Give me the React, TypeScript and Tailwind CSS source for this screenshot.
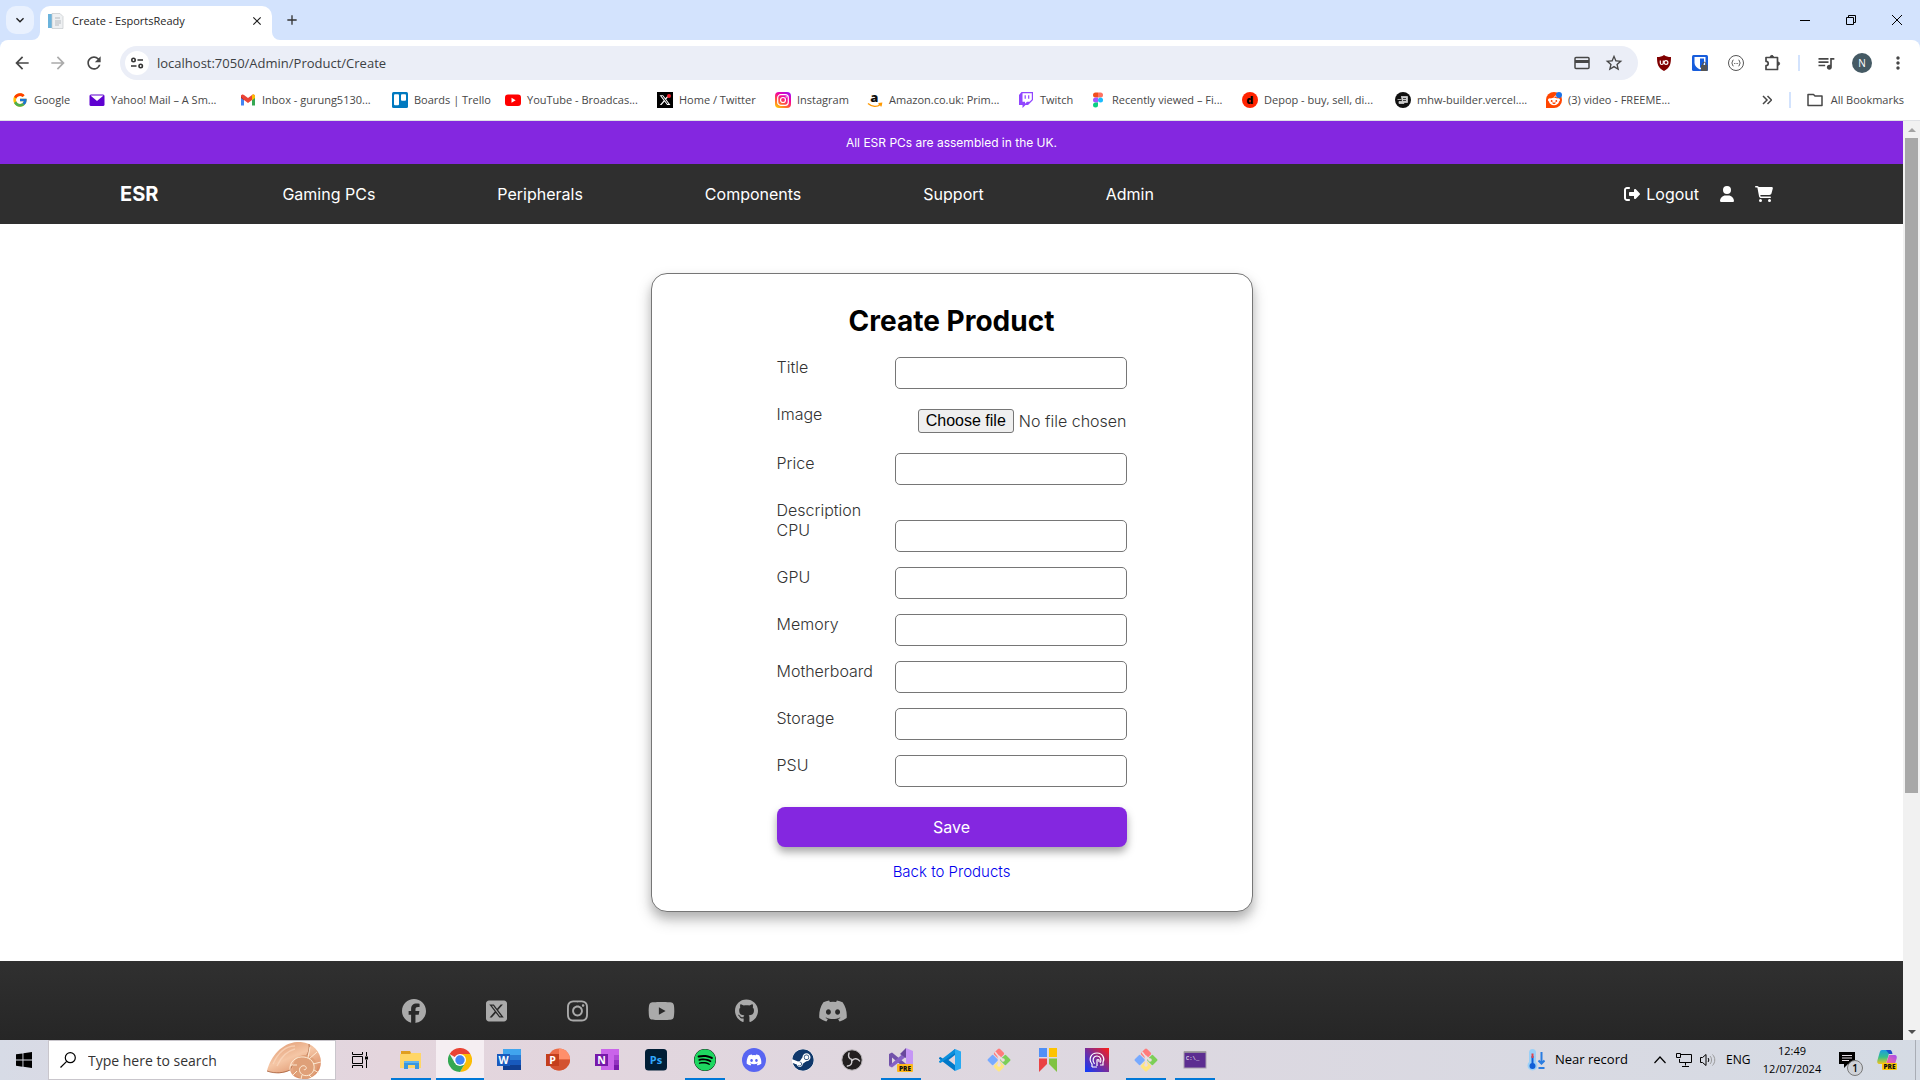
import React from "react";
import { FcGoogle } from "react-icons/fc";
import {
  FaCartShopping, FaDiscord, FaFacebook, FaGithub, FaInstagram, FaRedditAlien, FaRightFromBracket,
  FaSpotify, FaSquareXTwitter, FaSteam, FaUser, FaXTwitter, FaYoutube,
} from "react-icons/fa6";
import { MdClose, MdMoreVert, MdStarBorder, MdArrowBack, MdArrowForward, MdRefresh, MdAdd, MdQueueMusic, MdOutlineKeyboardArrowDown } from "react-icons/md";

const UI = "font-['Open_Sans',sans-serif]";

/* ---------- Bookmark icons ---------- */

const YahooMail = () => (
  <svg viewBox="0 0 16 16" className="size-4"><rect x="0.5" y="2.5" width="15" height="11.5" rx="1.5" fill="#5f01d1" /><path d="M1.5 3.5h13L8 9z" fill="#fff" /></svg>
);
const Gmail = () => (
  <svg viewBox="0 0 16 16" className="size-4">
    <path d="M1 4v9.5h3V7z" fill="#4285f4" /><path d="M15 4v9.5h-3V7z" fill="#34a853" />
    <path d="M1 3.6h3v4.6L1 6z" fill="#c5221f" />
    <path d="M1 4.2C1 2.5 3 2 4 3l4 3 4-3c1-1 3-.5 3 1.2L12 8 8 11 4 8z" fill="#ea4335" />
    <path d="M12 3v5.2L15 6V4.2C15 2.6 13 2 12 3z" fill="#fbbc04" />
  </svg>
);
const Trello = () => (
  <svg viewBox="0 0 16 16" className="size-4"><rect width="16" height="16" rx="1.5" fill="#0079bf" /><rect x="2" y="2.2" width="5" height="11" rx="1" fill="#fff" /><rect x="9" y="2.2" width="5" height="6.5" rx="1" fill="#fff" /></svg>
);
const YouTubeMark = () => (
  <svg viewBox="0 0 16 16" className="size-4"><rect y="2.5" width="16" height="11.5" rx="3" fill="#f00" /><path d="M6.5 5.7v5l4.2-2.5z" fill="#fff" /></svg>
);
const XMark = () => (
  <span className="relative flex size-4 items-center justify-center bg-black text-white">
    <FaXTwitter className="size-3" />
    <span className="absolute right-0.5 top-0.5 size-1 rounded-full bg-[#f4212e]" />
  </span>
);
const InstagramMark = () => (
  <svg viewBox="0 0 16 16" className="size-4">
    <defs>
      <linearGradient id="ig" x1="0.2" y1="1" x2="0.8" y2="0"><stop offset="0" stopColor="#ffc107" /><stop offset="0.35" stopColor="#ff543e" /><stop offset="0.65" stopColor="#f4039e" /><stop offset="1" stopColor="#a611f0" /></linearGradient>
    </defs>
    <rect width="16" height="16" rx="4" fill="url(#ig)" />
    <rect x="2.7" y="2.7" width="10.6" height="10.6" rx="3" fill="none" stroke="#fff" strokeWidth="1.2" />
    <circle cx="8" cy="8" r="2.5" fill="none" stroke="#fff" strokeWidth="1.2" /><circle cx="11.2" cy="4.9" r="0.7" fill="#fff" />
  </svg>
);
const AmazonMark = () => (
  <svg viewBox="0 0 16 16" className="size-4 overflow-visible">
    <text x="7.3" y="10" textAnchor="middle" fontSize="13" fontWeight="800" fontFamily="Open Sans" fill="#111">a</text>
    <path d="M1 11.5c4 3.500 9 3.500 12.500 1M11.500 11.700l3-.4-.6 3" fill="none" stroke="#f90" strokeWidth="1.4" />
  </svg>
);
const TwitchMark = () => (
  <svg viewBox="0 0 16 16" className="size-4"><path d="M3.500 0 1 3v10h3.500v3l3-3H10l5-5V0z" fill="#9146ff" /><path d="M4.500 1.200h9.300v6.300l-2.300 2.300H9L7 11.800v-2H4.500z" fill="#fff" /><path d="M7.200 3.300v3.500M10.700 3.300v3.500" stroke="#9146ff" strokeWidth="1.2" /></svg>
);
const FigmaMark = () => (
  <svg viewBox="0 0 16 16" className="size-4">
    <path d="M8 .5H5.500a2.500 2.500 0 0 0 0 5H8z" fill="#f24e1e" /><path d="M8 .5h2.500a2.500 2.500 0 0 1 0 5H8z" fill="#ff7262" />
    <path d="M8 5.500H5.500a2.500 2.500 0 0 0 0 5H8z" fill="#a259ff" /><circle cx="10.500" cy="8" r="2.500" fill="#1abcfe" />
    <path d="M8 10.500H5.500A2.500 2.500 0 1 0 8 13z" fill="#0acf83" />
  </svg>
);
const DepopMark = () => (
  <svg viewBox="0 0 16 16" className="size-4"><circle cx="8" cy="8" r="8" fill="#ff2300" /><text x="7.7" y="12" textAnchor="middle" fontSize="11" fontWeight="800" fontFamily="Open Sans" fill="#000">d</text></svg>
);
const MhwMark = () => (
  <svg viewBox="0 0 16 16" className="size-4"><circle cx="8" cy="8" r="8" fill="#111" /><path d="M6 4.500h6.500v6H9v1H4v-2h3M2.500 7.500h4" fill="#ccc" stroke="#ccc" strokeWidth="0.8" /><path d="M8 6.500h3M8 8.500h3" stroke="#444" /></svg>
);
const RedditMark = () => (
  <span className="relative flex size-4 items-center justify-center rounded-full rounded-bl-none bg-[#ff4500] text-white">
    <FaRedditAlien className="size-3" />
    <span className="absolute right-0 top-0 size-1.5 rounded-full bg-[#1a73e8]" />
  </span>
);

const bookmarks: { label: string; icon: React.ReactNode; width: string }[] = [
  { label: "Google", icon: <FcGoogle className="size-4" />, width: "w-[77px]" },
  { label: "Yahoo! Mail – A Sm...", icon: <YahooMail />, width: "w-[151px]" },
  { label: "Inbox - gurung5130...", icon: <Gmail />, width: "w-[152px]" },
  { label: "Boards | Trello", icon: <Trello />, width: "w-[113px]" },
  { label: "YouTube - Broadcas...", icon: <YouTubeMark />, width: "w-[152px]" },
  { label: "Home / Twitter", icon: <XMark />, width: "w-[118px]" },
  { label: "Instagram", icon: <InstagramMark />, width: "w-[92px]" },
  { label: "Amazon.co.uk: Prim...", icon: <AmazonMark />, width: "w-[151px]" },
  { label: "Twitch", icon: <TwitchMark />, width: "w-[72px]" },
  { label: "Recently viewed – Fi...", icon: <FigmaMark />, width: "w-[152px]" },
  { label: "Depop - buy, sell, di...", icon: <DepopMark />, width: "w-[153px]" },
  { label: "mhw-builder.vercel....", icon: <MhwMark />, width: "w-[151px]" },
  { label: "(3) video - FREEME...", icon: <RedditMark />, width: "w-[151px]" },
];

/* ---------- Browser chrome ---------- */

function TabStrip() {
  return (
    <div className="flex h-10 shrink-0 items-stretch bg-[#d3e3fd] pl-1.5">
      <button aria-label="Search tabs" className="mt-1.5 flex h-7 w-7 items-center justify-center rounded-[10px] bg-[#e9f1fe] text-[#1f1f1f]">
        <MdOutlineKeyboardArrowDown className="size-4 stroke-current" />
      </button>
      <div className="relative ml-1.5 mt-1.5 flex w-[232px] items-center rounded-t-[10px] bg-white pl-2 pr-2 pb-1">
        <svg viewBox="0 0 8 8" className="absolute -left-2 bottom-0 size-2"><path d="M8 0v8H0a8 8 0 0 0 8-8z" fill="#fff" /></svg>
        <svg viewBox="0 0 8 8" className="absolute -right-2 bottom-0 size-2"><path d="M0 0v8h8a8 8 0 0 1-8-8z" fill="#fff" /></svg>
        <svg viewBox="0 0 16 16" className="size-4"><path d="M0 1h4v14H0z" fill="#6bb3dc" /><path d="M4 .5h8l3 3v12H4z" fill="#eef0f2" stroke="#c4c8cc" strokeWidth="0.7" /><path d="M7 5h5M7 8h6M7 10h6M7 12h4" stroke="#b5babf" /></svg>
        <span className="ml-2 text-[11px] text-[#1f1f1f]">Create - EsportsReady</span>
        <button aria-label="Close tab" className="ml-auto text-[#1f1f1f]"><MdClose className="size-3.5 stroke-current" /></button>
      </div>
      <button aria-label="New tab" className="ml-2 flex w-6 items-center justify-center text-[#333]"><MdAdd className="size-4" /></button>
      <div className="ml-auto flex items-center text-black">
        <button aria-label="Minimize" className="flex w-[46px] justify-center"><svg viewBox="0 0 10 10" className="size-2.5"><path d="M0 5.500h10" stroke="currentColor" /></svg></button>
        <button aria-label="Restore" className="flex w-[46px] justify-center"><svg viewBox="0 0 10 10" className="size-2.5" fill="none" stroke="currentColor"><path d="M.5 2.500h7v7h-7zM2.500 2.500v-2h7v7h-2" /></svg></button>
        <button aria-label="Close window" className="flex w-[46px] justify-center"><svg viewBox="0 0 10 10" className="size-2.5"><path d="M0 0l10 10M10 0 0 10" stroke="currentColor" /></svg></button>
      </div>
    </div>
  );
}

function Toolbar() {
  return (
    <div className="flex h-[46px] shrink-0 items-center rounded-t-lg bg-white pl-3 text-[#474747]">
      <button aria-label="Back" className="flex w-5 justify-center"><MdArrowBack className="size-5" /></button>
      <button aria-label="Forward" className="ml-4 flex w-5 justify-center text-[#ababab]"><MdArrowForward className="size-5" /></button>
      <button aria-label="Reload" className="ml-4 flex w-5 justify-center"><MdRefresh className="size-5" /></button>
      <div className="ml-4 flex h-[34px] flex-1 items-center rounded-full bg-[#ebeef7] pl-[5px] pr-3.5">
        <button aria-label="View site information" className="flex size-6 items-center justify-center rounded-full bg-white text-[#333]">
          <svg viewBox="0 0 14 14" className="size-3.5" fill="none" stroke="currentColor" strokeWidth="1.6"><circle cx="3.5" cy="4" r="1.7" /><path d="M7.500 4H13M1 10h5.500" /><circle cx="10.7" cy="10" r="1.7" /></svg>
        </button>
        <input aria-label="Address" defaultValue="localhost:7050/Admin/Product/Create" className="ml-2 h-6 flex-1 bg-transparent text-[13px] leading-6 text-[#3c4043] outline-none" />
        <svg viewBox="0 0 16 16" className="size-4"><rect x="1" y="2.5" width="14" height="11" rx="1" fill="none" stroke="currentColor" strokeWidth="1.5" /><path d="M1 5h14v3H1z" fill="currentColor" /></svg>
        <button aria-label="Bookmark this tab" className="ml-3.5"><MdStarBorder className="size-5" /></button>
      </div>
      <div className="ml-[18px] flex items-center">
        <svg viewBox="0 0 16 16" className="size-4"><path d="M8 0c2 1.500 4 2 7 2 0 7-1 11-7 14C2 13 1 9 1 2c3 0 5-.5 7-2z" fill="#800000" /><path d="M4.300 5.500V8a1.500 1.500 0 0 0 3 0V5.500" fill="none" stroke="#fff" strokeWidth="1.2" /><circle cx="10" cy="7.5" r="1.9" fill="none" stroke="#fff" strokeWidth="1.2" /></svg>
        <svg viewBox="0 0 16 16" className="ml-5 size-4"><rect width="16" height="16" rx="1.5" fill="#175ddc" /><path d="M2.500 2h11v6c0 3-2.500 5-5.500 6.500C5 13 2.500 11 2.500 8z" fill="#fff" /><path d="M8 3.500h4V8c0 2-1.500 3.500-4 5z" fill="#175ddc" /><path d="M9 10h6.500v6H9z" fill="#555" /><path d="M10.500 10V9a1.700 1.700 0 0 1 3.500 0v1" fill="none" stroke="#555" /></svg>
        <svg viewBox="0 0 16 16" className="ml-5 size-4" fill="none" stroke="#555"><circle cx="8" cy="8" r="7.5" /><path d="M5.500 5c-1.500 0-.5 2-1.800 3 1.300 1 .3 3 1.800 3M10.500 5c1.500 0 .5 2 1.800 3-1.300 1-.3 3-1.800 3M6 8.500h.8M7.700 8.500h.8M9.300 8.500h.8" /></svg>
        <button aria-label="Extensions" className="ml-5">
          <svg viewBox="0 0 18 18" className="size-[18px]" fill="none" stroke="currentColor" strokeWidth="1.7" strokeLinejoin="round"><path d="M2 3.500h11.500v12H2v-3.800a2.200 2.200 0 0 0 0-4.400z" /><path d="M6.200 3a1.600 1.600 0 0 1 3.200 0zM14 8a1.600 1.600 0 0 1 0 3.200z" fill="currentColor" strokeWidth="1" /></svg>
        </button>
        <span className="ml-4 h-4 w-0.5 bg-[#d3e3fd]" />
        <button aria-label="Media controls" className="ml-4"><MdQueueMusic className="size-5" /></button>
        <button aria-label="Profile" className="ml-4 flex size-5 items-center justify-center rounded-full bg-[#455a64] text-[10px] text-white">N</button>
        <button aria-label="Menu" className="ml-4 mr-3"><MdMoreVert className="size-5" /></button>
      </div>
    </div>
  );
}

function BookmarksBar() {
  return (
    <div className="flex h-[35px] shrink-0 items-start border-b border-[#dfe1e5] bg-white pl-3 pt-1.5 text-[11px] leading-4 text-[#474747]">
      {bookmarks.map((b) => (
        <a key={b.label} href="#" className={`flex h-4 shrink-0 items-center gap-1.5 whitespace-nowrap ${b.width}`}>
          <span className="shrink-0">{b.icon}</span>
          {b.label}
        </a>
      ))}
      <div className="ml-auto flex h-4 items-center pr-4">
        <button aria-label="More bookmarks"><svg viewBox="0 0 10 10" className="size-2.5" fill="none" stroke="currentColor" strokeWidth="1.5"><path d="m1 1 4 4-4 4M5.500 1l4 4-4 4" /></svg></button>
        <span className="ml-[17px] h-4 w-0.5 bg-[#d3e3fd]" />
        <a href="#" className="ml-4 flex items-center gap-2"><svg viewBox="0 0 16 14" className="h-3.5 w-4" fill="none" stroke="currentColor" strokeWidth="1.5"><path d="M1 2.500v10h14V3H8L6.500 1.500H1z" strokeLinejoin="round" /></svg>All Bookmarks</a>
      </div>
    </div>
  );
}

/* ---------- Web page ---------- */

function SiteHeader() {
  return (
    <header>
      <p className="flex h-[43px] items-center justify-center bg-[#8427e0] text-xs text-white">All ESR PCs are assembled in the UK.</p>
      <nav className="flex h-[60px] items-center bg-[#2f2f2f] pl-[120px] pr-[130px] text-base text-white">
        <a href="#" className="mr-[124px] text-xl font-bold">ESR</a>
        <div className="flex items-center gap-[122px]">
          {["Gaming PCs", "Peripherals", "Components", "Support", "Admin"].map((n) => (
            <a key={n} href="#">{n}</a>
          ))}
        </div>
        <a href="#" className="ml-auto flex items-center gap-1.5"><FaRightFromBracket className="size-4" />Logout</a>
        <a href="#" aria-label="Account" className="ml-5"><FaUser className="size-4" /></a>
        <a href="#" aria-label="Cart" className="ml-5"><FaCartShopping className="h-4 w-[18px]" /></a>
      </nav>
    </header>
  );
}

function Field({ name }: { name: string }) {
  const id = name.toLowerCase();
  return (
    <div className="mb-[15px] flex items-start justify-between">
      <label htmlFor={id}>{name}</label>
      <input id={id} type="text" className="h-8 w-[232px] rounded-[5px] border border-[#767676] bg-white px-2" />
    </div>
  );
}

function CreateProduct() {
  return (
    <main className="flex justify-center bg-white py-[49px]">
      <section className="flex w-[602px] flex-col items-center rounded-2xl border border-[#767676] bg-white pb-[29px] pt-[30px] shadow-[0_8px_16px_rgba(0,0,0,0.2),0_6px_10px_rgba(0,0,0,0.15)]">
        <h1 className="mb-[19px] text-[28px] font-bold leading-[34px] text-black">Create Product</h1>
        <form className="w-[350px] font-light leading-5 text-[#333]" onSubmit={(e) => e.preventDefault()}>
          <Field name="Title" />
          <div className="mb-[15px] flex h-[34px] items-start justify-between">
            <label htmlFor="image">Image</label>
            <input id="image" type="file" className="sr-only" />
            <span className="flex items-center gap-[5px] pt-[5px]">
              <button type="button" className="h-6 rounded-[3px] border border-[#767676] bg-[#efefef] px-[7px] font-['Liberation_Sans',sans-serif] font-normal text-black">Choose file</button>
              No file chosen
            </span>
          </div>
          <Field name="Price" />
          <div>Description</div>
          {["CPU", "GPU", "Memory", "Motherboard", "Storage", "PSU"].map((n) => <Field key={n} name={n} />)}
          <button type="submit" className="mt-[5px] h-10 w-full rounded-lg bg-[#8427e0] font-normal text-white shadow-[0_5px_8px_rgba(0,0,0,0.35)]">Save</button>
        </form>
        <a href="#" className="mt-[15px] text-[15px] font-light leading-5 text-[#0000ee]">Back to Products</a>
      </section>
    </main>
  );
}

function SiteFooter() {
  return (
    <footer className="h-[120px] bg-linear-to-b from-[#303030] to-[#212121]">
      <div className="flex h-[99px] items-center gap-[60px] pl-[402px] text-[#aaa]">
        <a href="#" aria-label="Facebook"><FaFacebook className="size-6" /></a>
        <a href="#" aria-label="X"><FaSquareXTwitter className="h-6 w-[21px]" /></a>
        <a href="#" aria-label="Instagram"><FaInstagram className="h-6 w-[21px]" /></a>
        <a href="#" aria-label="YouTube"><FaYoutube className="h-6 w-[27px]" /></a>
        <a href="#" aria-label="GitHub"><FaGithub className="h-6 w-[23px]" /></a>
        <a href="#" aria-label="Discord"><FaDiscord className="h-6 w-[30px]" /></a>
      </div>
    </footer>
  );
}

function Scrollbar() {
  return (
    <div className="flex w-[17px] shrink-0 flex-col bg-[#f1f1f1]">
      <span className="flex h-[17px] items-center justify-center"><svg viewBox="0 0 8 4" className="h-1 w-2"><path d="M0 4 4 0l4 4z" fill="#a3a3a3" /></svg></span>
      <div className="flex-1 px-0.5"><div className="h-[74%] bg-[#a8a8a8]" /></div>
      <span className="flex h-[17px] items-center justify-center"><svg viewBox="0 0 8 4" className="h-1 w-2"><path d="M0 0l4 4 4-4z" fill="#505050" /></svg></span>
    </div>
  );
}

/* ---------- Taskbar ---------- */

const OfficeTile = ({ letter, colors }: { letter: string; colors: string[] }) => (
  <svg viewBox="0 0 24 24" className="size-6">
    <path d="M6 1h18v6H6z" fill={colors[0]} /><path d="M6 7h18v5H6z" fill={colors[1]} /><path d="M6 12h18v5H6z" fill={colors[2]} /><path d="M6 17h18v5H6z" fill={colors[3]} />
    <rect y="6" width="13" height="12" fill={colors[4]} />
    <text x="6.5" y="15.7" textAnchor="middle" fontSize="10.5" fontWeight="700" fontFamily="Open Sans" fill="#fff">{letter}</text>
  </svg>
);
const PowerPoint = () => (
  <svg viewBox="0 0 24 24" className="size-6">
    <circle cx="13" cy="11.5" r="11" fill="#ed6c47" /><path d="M13 .5a11 11 0 0 1 11 11H13z" fill="#ff8f6b" /><path d="M2 11.500h22a11 11 0 0 1-22 0z" fill="#d35230" />
    <rect y="6" width="13" height="12" fill="#c43e1c" /><text x="6.5" y="15.7" textAnchor="middle" fontSize="10.5" fontWeight="700" fontFamily="Open Sans" fill="#fff">P</text>
  </svg>
);
const OneNote = () => (
  <svg viewBox="0 0 24 24" className="size-6">
    <path d="M6 1h18v21H6z" fill="#ca64ea" /><path d="M19 7h5v5h-5z" fill="#ae4bd5" /><path d="M19 12h5v5h-5z" fill="#9332bf" /><path d="M19 17h5v5h-5z" fill="#7719aa" />
    <rect y="6" width="13" height="12" fill="#7719aa" /><text x="6.5" y="15.7" textAnchor="middle" fontSize="10.5" fontWeight="700" fontFamily="Open Sans" fill="#fff">N</text>
  </svg>
);
const Photoshop = () => (
  <svg viewBox="0 0 24 24" className="size-6"><rect x="1" y="1" width="22" height="21.5" rx="3.5" fill="#001e36" /><text x="12" y="16" textAnchor="middle" fontSize="11" fontWeight="700" fontFamily="Open Sans" fill="#31a8ff">Ps</text></svg>
);
const Explorer = () => (
  <svg viewBox="0 0 24 24" className="size-6"><path d="M2 3h9l1 2h9v5H2z" fill="#e09f1f" /><path d="M1 6h10l1-1h10v15H1z" fill="#ffd667" /><path d="M5 21v-8h15v8h-4v-4h-7v4z" fill="#3b97de" /><path d="M5 13h15v2H5z" fill="#5fb4f0" /></svg>
);
const Chrome = () => (
  <svg viewBox="0 0 24 24" className="size-6">
    <path d="M12 12 1.600 6A12 12 0 0 1 22.400 6z" fill="#ea4335" /><path d="M12 6h10.400A12 12 0 0 1 12 24l5.200-9z" fill="#fbbc05" /><path d="M1.600 6A12 12 0 0 0 12 24l5.200-9L12 12 6.800 15z" fill="#34a853" />
    <circle cx="12" cy="12" r="6" fill="#fff" /><circle cx="12" cy="12" r="4.7" fill="#4285f4" />
  </svg>
);
const Spotify = () => <FaSpotify className="size-[22px] rounded-full bg-black text-[#1ed760]" />;
const DiscordApp = () => <span className="flex size-6 items-center justify-center rounded-full bg-[#5865f2] text-white"><FaDiscord className="size-4" /></span>;
const Steam = () => <FaSteam className="size-[22px] rounded-full bg-white text-[#10386b]" />;
const Obs = () => (
  <svg viewBox="0 0 24 24" className="size-6">
    <circle cx="12" cy="12" r="10.2" fill="#231f20" stroke="#b9b5b8" strokeWidth="1" />
    <g fill="none" stroke="#d0cdd0" strokeWidth="1.5" strokeLinecap="round">
      <path d="M12 11.500c-3-.5-4.300-3.300-3-6.500" />
      <path d="M12 11.500c-3-.5-4.300-3.300-3-6.500" transform="rotate(120 12 12)" />
      <path d="M12 11.500c-3-.5-4.300-3.300-3-6.500" transform="rotate(240 12 12)" />
    </g>
  </svg>
);
const VisualStudio = () => (
  <svg viewBox="0 0 24 24" className="size-6">
    <path d="M0 6 3 4.500l16 13-1 4.500L3 9.500v7L0 18z" fill="#7252aa" /><path d="M0 18 18 2v6L3 19.500z" fill="#8661c5" /><path d="m17 0 7 3v18l-7 3z" fill="#c596f5" /><path d="m17 0-6 6 6 4z" fill="#68479c" />
    <rect x="8" y="16" width="16" height="8" rx="1" fill="#ffb91a" /><text x="16" y="22.5" textAnchor="middle" fontSize="6.5" fontWeight="800" fontFamily="Open Sans" fill="#111">PRE</text>
  </svg>
);
const VsCode = () => (
  <svg viewBox="0 0 24 24" className="size-6"><path d="M17 1 6 11.500 2.500 9 1 9.800v1L17 23z" fill="#0078c8" /><path d="M17 1 1 13.300v1l1.500.8L17 5z" fill="#0a8fdc" /><path d="m17 1 6 2.500v17L17 23z" fill="#29aaf2" /><path d="M17 7v10l-6.500-5z" fill="#e3d5dc" /></svg>
);
const GitApp = () => (
  <svg viewBox="0 0 24 24" className="size-6">
    <g transform="rotate(45 12 12)"><rect x="3.5" y="3.5" width="8" height="8" rx="1.5" fill="#ff7b7b" /><rect x="12.5" y="3.5" width="8" height="8" rx="1.5" fill="#7ccf57" /><rect x="3.5" y="12.5" width="8" height="8" rx="1.5" fill="#77aaff" /><rect x="12.5" y="12.5" width="8" height="8" rx="1.5" fill="#ffe680" /></g>
    <path d="m8 4 4 5v9M12 9l4 3" fill="none" stroke="#eadde3" strokeWidth="1.7" /><circle cx="12" cy="9" r="1.5" fill="#eadde3" /><circle cx="16" cy="12" r="1.8" fill="#eadde3" /><circle cx="12" cy="17" r="1.8" fill="#eadde3" />
  </svg>
);
const Ribbon = () => (
  <svg viewBox="0 0 24 24" className="size-6"><path d="M3 0h8v9H3z" fill="#4f8ff7" /><path d="M13 0h8v9h-8z" fill="#fdc300" /><path d="M3 10.500h8V16l-8 8z" fill="#ea4344" /><path d="M13 10.500h8V24l-8-8z" fill="#80c342" /></svg>
);
const HeadApp = () => (
  <svg viewBox="0 0 24 24" className="size-6">
    <defs><linearGradient id="head" x1="0" y1="1" x2="1" y2="0"><stop offset="0" stopColor="#0a3cff" /><stop offset="0.5" stopColor="#7a2c9a" /><stop offset="1" stopColor="#ff1e14" /></linearGradient></defs>
    <path d="M0 0h24v24H0z" fill="url(#head)" />
    <path d="M7 19v-3c-4-5-1-11 5-11s8 6 6 9v3h-3M9.500 16c-3-4-1-8 2.500-8s5 4 3 7M12 18v-6a1.500 1.500 0 0 1 2 0v2M7 19h5" fill="none" stroke="#fff" strokeWidth="1.2" />
  </svg>
);
const Terminal = () => (
  <svg viewBox="0 0 24 24" className="size-6"><rect x="1" y="4" width="22" height="16" fill="#5c2d91" stroke="#a9a0ae" /><path d="M1 4h22" stroke="#999" strokeWidth="1.5" /><text x="3" y="11.5" fontSize="5.5" fontFamily="Liberation Mono" fill="#fff">C:\_</text></svg>
);

const apps: { name: string; icon: React.ReactNode; running?: boolean; active?: boolean }[] = [
  { name: "File Explorer", icon: <Explorer />, running: true },
  { name: "Google Chrome", icon: <Chrome />, active: true },
  { name: "Word", icon: <OfficeTile letter="W" colors={["#41a5ee", "#2b7cd3", "#185abd", "#103f91", "#185abd"]} /> },
  { name: "PowerPoint", icon: <PowerPoint /> },
  { name: "OneNote", icon: <OneNote /> },
  { name: "Photoshop", icon: <Photoshop /> },
  { name: "Spotify", icon: <Spotify />, running: true },
  { name: "Discord", icon: <DiscordApp /> },
  { name: "Steam", icon: <Steam /> },
  { name: "OBS Studio", icon: <Obs /> },
  { name: "Visual Studio Preview", icon: <VisualStudio />, running: true },
  { name: "Visual Studio Code", icon: <VsCode /> },
  { name: "Git Bash", icon: <GitApp /> },
  { name: "Ribbon", icon: <Ribbon /> },
  { name: "Head", icon: <HeadApp /> },
  { name: "Git GUI", icon: <GitApp />, running: true },
  { name: "Command Prompt", icon: <Terminal />, running: true },
];

const Shell = () => (
  <svg viewBox="0 0 54 37" className="h-[37px] w-[54px]">
    <defs><linearGradient id="shell" x1="0" y1="0" x2="0.6" y2="1"><stop offset="0" stopColor="#dd946c" /><stop offset="0.5" stopColor="#f5c6a5" /><stop offset="1" stopColor="#d98a62" /></linearGradient></defs>
    <path d="M0 29C4 14 15 1 30 0c14-1 24 9 24 20 0 10-8 17-17 17-8 0-13-4-14-9-6 4-15 4-23 1z" fill="url(#shell)" />
    <path d="M0 29c8 3 17 2 23-1 2-5 6-9 12-10 5-3 8-9 7-16" fill="none" stroke="#a5603c" strokeWidth="0.8" />
    <circle cx="38" cy="25" r="12" fill="#dfa078" />
    <g fill="none" stroke="#fff1dd" strokeWidth="0.9">
      <path d="M23 28c-1-8 6-14 14-13 7 1 11 6 10 12-1 5-6 8-11 6-4-2-5-7-1-9 3-1 5 1 4 3-1 1-2 1-2 0" />
      <path d="M41 16l2-11M42 17l8-7M46 22l8-2M47 28l5 3M42 33l3 3M35 33l-1 4M30 29l-4 4M30 23l-6 0" />
    </g>
    <path d="M6 22C11 11 19 4 28 4M10 24c4-9 10-15 18-17" fill="none" stroke="#fbd9bf" strokeWidth="1.4" opacity="0.7" />
  </svg>
);

function Taskbar() {
  return (
    <div className="flex h-10 shrink-0 items-stretch bg-linear-to-r from-[#d7dbe6] via-[#e4d5dd] via-20% to-[#d5dbe4] text-black">
      <button aria-label="Start" className="flex w-12 items-center justify-center"><svg viewBox="0 0 16 16" className="size-4"><path d="M0 2.300 6.500 1.400v6.200H0zM7.400 1.300 16 0v7.600H7.400zM0 8.500h6.500v6.200L0 13.800zM7.400 8.500H16V16l-8.600-1.200z" /></svg></button>
      <label className="flex w-[288px] items-center border border-[#c9c6cc] bg-white pl-[11px] pr-3.5">
        <svg viewBox="0 0 16 16" className="size-4" fill="none" stroke="#000" strokeWidth="1.2"><circle cx="10.3" cy="5.7" r="5" /><path d="M6.700 9.300.5 15.500" /></svg>
        <input aria-label="Search" placeholder="Type here to search" className="ml-3 h-6 w-0 flex-1 text-sm outline-none placeholder:text-[#333]" />
        <Shell />
      </label>
      <button aria-label="Task View" className="mr-[3px] flex w-12 items-center justify-center"><svg viewBox="0 0 16 16" className="size-4" fill="none" stroke="#000"><path d="M.5 0v2.500h10V0M.5 16v-2.500h10V16M.5 4.500h10v7H.5zM14.500 0v4M14.500 8v8" /><path d="M13 4.500h3v3h-3z" fill="#000" stroke="none" /></svg></button>
      {apps.map((a) => (
        <button key={a.name} aria-label={a.name} className={a.active ? "relative mr-px flex w-12 items-center justify-center bg-[#f5eef2]" : "relative mr-px flex w-12 items-center justify-center"}>
          {a.icon}
          {a.running && <span className="absolute inset-x-1 bottom-0 h-0.5 bg-[#0078d7]" />}
          {a.active && <span className="absolute inset-x-0 bottom-0 h-0.5 bg-[#0078d7]" />}
        </button>
      ))}
      <div className="ml-auto flex items-center">
        <svg viewBox="0 0 18 22" className="h-[22px] w-[18px]"><path d="M2 3.500a3.500 3.500 0 0 1 7 0V13a5 5 0 1 1-7 0z" fill="#9bd0f7" /><circle cx="5.5" cy="17" r="3" fill="#0f5fd7" /><path d="M5.500 17V7" stroke="#0f5fd7" strokeWidth="2" /><path d="M5.500 4.500V9" stroke="#e0434c" strokeWidth="2" /><path d="M14.500 3v11M11.500 11.500l3 3 3-3M11.500 19h6" fill="none" stroke="#2a7de1" strokeWidth="2" /></svg>
        <span className="ml-2.5 w-[75px] whitespace-nowrap text-[13px]">Near record</span>
        <svg viewBox="0 0 12 8" className="ml-6 h-2 w-3" fill="none" stroke="#000" strokeWidth="1.2"><path d="m.5 7 5.500-6 5.500 6" /></svg>
        <svg viewBox="0 0 16 14" className="ml-2.5 h-3.5 w-4" fill="none" stroke="#000"><path d="M5 1.500h10.500v8H3.500V6M.5.5h4v4h-4zM9.500 9.500v3M6 13.500h7" /></svg>
        <svg viewBox="0 0 16 14" className="ml-2 h-3.5 w-4" fill="none" stroke="#000"><path d="M.5 4.500h2l3.500-3v11l-3.500-3h-2zM8 5c1 1 1 3 0 4" /><path d="M10 3c2 2 2 6 0 8M12.500 1.500c3 3 3 8 0 11" stroke="#999" /></svg>
        <span className="ml-2.5 w-6 text-xs">ENG</span>
        <div className="ml-3 w-[60px] whitespace-nowrap text-center text-[11px] leading-[18px]"><div>12:49</div><div>12/07/2024</div></div>
        <button aria-label="Notifications" className="relative ml-[17px] size-6">
          <svg viewBox="0 0 24 24" className="size-6"><path d="M0 4h16v12H9l-4 4v-4H0z" /><path d="M3 7.500h10M3 10h10M3 12.500h7" stroke="#e4dde4" /></svg>
          <span className="absolute -bottom-1 right-0 flex size-4 items-center justify-center rounded-full border border-[#777] bg-[#cfd2d8] text-[10px] font-semibold">1</span>
        </button>
        <svg viewBox="0 0 20 20" className="ml-3.5 size-5">
          <defs><linearGradient id="cp" x1="0" y1="0" x2="0" y2="1"><stop offset="0" stopColor="#1b9de2" /><stop offset="0.5" stopColor="#35c08b" /><stop offset="1" stopColor="#f5c518" /></linearGradient><linearGradient id="cq" x1="1" y1="0" x2="0" y2="1"><stop offset="0" stopColor="#a24bf0" /><stop offset="1" stopColor="#ff6f91" /></linearGradient></defs>
          <path d="M5 0h8l-4 14H3c-3 0-3-2-2.500-4L2.500 3C3 1 3.500 0 5 0z" fill="url(#cp)" /><path d="M9 0h4c1.500 0 2 2 2.500 4H12z" fill="#1c4fc9" /><path d="M12 5h5c3 0 3 2 2.500 4l-1.500 5H9z" fill="url(#cq)" />
          <rect x="5" y="13" width="15" height="7" rx="1" fill="#ffc80a" /><text x="12.5" y="19" textAnchor="middle" fontSize="6.5" fontWeight="800" fontFamily="Open Sans" fill="#111">PRE</text>
        </svg>
        <span className="ml-[18px] h-10 w-[5px] border-l border-[#a9adb5]" />
      </div>
    </div>
  );
}

export default function App() {
  return (
    <div className={`flex h-screen min-w-[1280px] flex-col overflow-hidden bg-white ${UI}`}>
      <div className="flex flex-col bg-[#d3e3fd]">
        <TabStrip />
        <Toolbar />
        <BookmarksBar />
      </div>
      <div className="flex min-h-0 flex-1">
        <div className="min-w-0 flex-1 overflow-hidden font-['Inter',sans-serif]">
          <SiteHeader />
          <CreateProduct />
          <SiteFooter />
        </div>
        <Scrollbar />
      </div>
      <Taskbar />
    </div>
  );
}
